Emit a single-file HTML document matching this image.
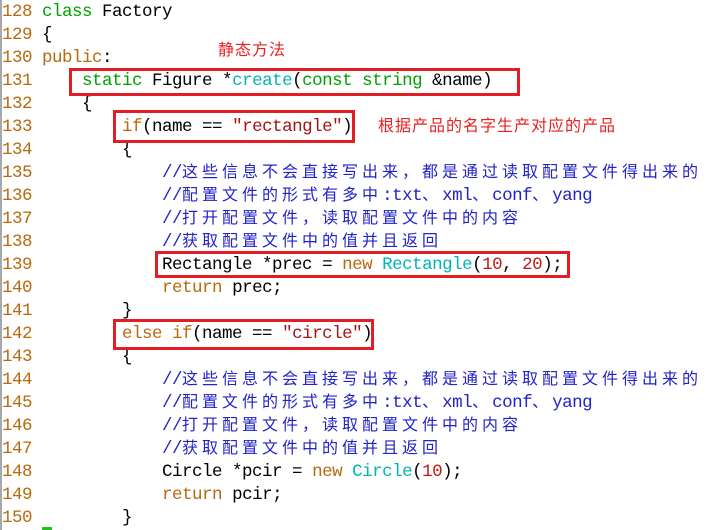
<!DOCTYPE html>
<html><head><meta charset="utf-8"><style>
body{margin:0;width:722px;height:530px;background:#fff;overflow:hidden;position:relative;font-family:"Liberation Mono","Noto Sans CJK SC",monospace;font-size:17.5px;letter-spacing:-0.5px}
.l{position:absolute;left:2px;height:23px;line-height:23px;white-space:pre;color:#000;margin-top:1px}
.n{color:#b8690f}
.k{color:#00a000}
.b{color:#b8690f}
.f{color:#00b4b4}
.s{color:#a31515}
.d{color:#c01818}
.c{color:#2222c8}
.z{letter-spacing:4px;font-family:"Noto Sans CJK SC",sans-serif;font-size:16px;line-height:1}
.box{position:absolute;border:3px solid #e41c24;box-sizing:border-box}
.note{position:absolute;color:#e82020;font-family:"Noto Sans CJK SC",sans-serif;font-size:16px;white-space:nowrap;letter-spacing:1px;line-height:20px}
</style></head><body>
<div style="position:absolute;left:0;top:0;width:2px;height:530px;background:#a8a8a8"></div>
<div class="l" style="top:0"><span class="n">128</span> <span class="k">class</span> Factory</div>
<div class="l" style="top:23px"><span class="n">129</span> {</div>
<div class="l" style="top:46px"><span class="n">130</span> <span class="b">public</span>:</div>
<div class="l" style="top:69px"><span class="n">131</span>     <span class="k">static</span> Figure *<span class="f">create</span>(<span class="k">const</span> <span class="k">string</span> &amp;name)</div>
<div class="l" style="top:92px"><span class="n">132</span>     {</div>
<div class="l" style="top:115px"><span class="n">133</span>         <span class="b">if</span>(name == <span class="s">"rectangle"</span>)</div>
<div class="l" style="top:138px"><span class="n">134</span>         {</div>
<div class="l c" style="top:161px"><span class="n">135</span>             //<span class="z">这些信息不会直接写出来，都是通过读取配置文件得出来的</span></div>
<div class="l c" style="top:184px"><span class="n">136</span>             //<span class="z">配置文件的形式有多中</span>:txt<span class="z">、</span>xml<span class="z">、</span>conf<span class="z">、</span>yang</div>
<div class="l c" style="top:207px"><span class="n">137</span>             //<span class="z">打开配置文件，读取配置文件中的内容</span></div>
<div class="l c" style="top:230px"><span class="n">138</span>             //<span class="z">获取配置文件中的值并且返回</span></div>
<div class="l" style="top:253px"><span class="n">139</span>             Rectangle *prec = <span class="b">new</span> <span class="f">Rectangle</span>(<span class="d">10</span>, <span class="d">20</span>);</div>
<div class="l" style="top:276px"><span class="n">140</span>             <span class="b">return</span> prec;</div>
<div class="l" style="top:299px"><span class="n">141</span>         }</div>
<div class="l" style="top:322px"><span class="n">142</span>         <span class="b">else if</span>(name == <span class="s">"circle"</span>)</div>
<div class="l" style="top:345px"><span class="n">143</span>         {</div>
<div class="l c" style="top:368px"><span class="n">144</span>             //<span class="z">这些信息不会直接写出来，都是通过读取配置文件得出来的</span></div>
<div class="l c" style="top:391px"><span class="n">145</span>             //<span class="z">配置文件的形式有多中</span>:txt<span class="z">、</span>xml<span class="z">、</span>conf<span class="z">、</span>yang</div>
<div class="l c" style="top:414px"><span class="n">146</span>             //<span class="z">打开配置文件，读取配置文件中的内容</span></div>
<div class="l c" style="top:437px"><span class="n">147</span>             //<span class="z">获取配置文件中的值并且返回</span></div>
<div class="l" style="top:460px"><span class="n">148</span>             Circle *pcir = <span class="b">new</span> <span class="f">Circle</span>(<span class="d">10</span>);</div>
<div class="l" style="top:483px"><span class="n">149</span>             <span class="b">return</span> pcir;</div>
<div class="l" style="top:506px"><span class="n">150</span>         }</div>
<div style="position:absolute;left:42px;top:527px;width:10px;height:3px;background:#20c020"></div>
<div class="box" style="left:69px;top:68px;width:451px;height:28px"></div>
<div class="box" style="left:113px;top:110px;width:242px;height:33px"></div>
<div class="box" style="left:155px;top:251px;width:415px;height:27px"></div>
<div class="box" style="left:113px;top:319px;width:261px;height:31px"></div>
<div class="note" style="left:218px;top:38px">静态方法</div>
<div class="note" style="left:378px;top:114px">根据产品的名字生产对应的产品</div>
</body></html>
